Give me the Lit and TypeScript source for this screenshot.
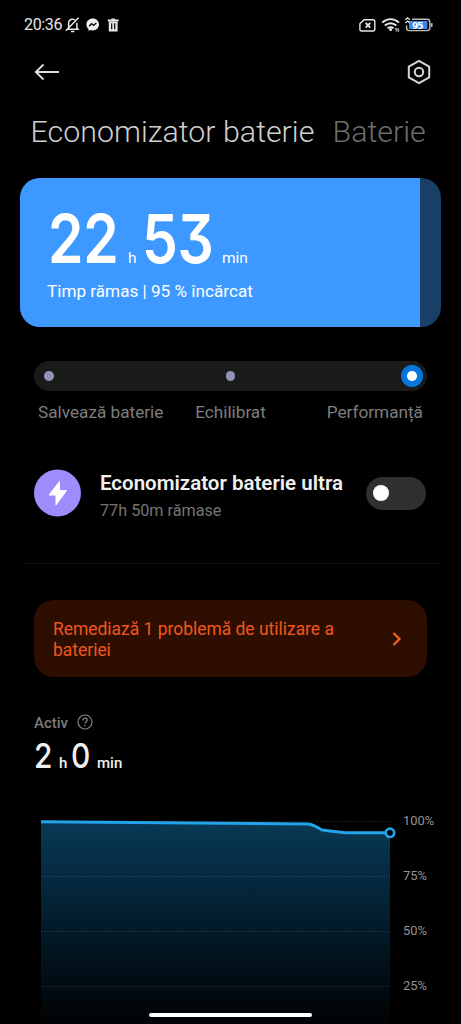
import { LitElement, html, css, svg } from "lit";
import { customElement, state } from "lit/decorators.js";

@customElement("status-bar")
class StatusBar extends LitElement {
  static styles = css`
    :host { display: flex; align-items: center; height: 50px; padding: 0 27px 0 24px; box-sizing: border-box; color: #e8e8e8; }
    .time { font-size: 16px; line-height: 20px; width: 41px; padding-top: 1px; letter-spacing: -0.35px; white-space: nowrap; }
    .spacer { flex: 1; }
    svg { display: block; flex: none; }
    .level { font: 700 9px "DejaVu Sans", sans-serif; }
  `;
  render() {
    return html`
      <span class="time">20:36</span>
      <svg width="15" height="16" viewBox="0 0 15 16" fill="none" stroke="#e8e8e8" stroke-width="1.5">
        <path d="M2.400 12.300h11.600M3.600 11V6.800C3.600 3.800 5 2.300 7.600 2.300c1 0 1.700.2 2.400.7M11.900 5.800V12M.8 13.800 13.600.8M6 14.500h3.400" />
      </svg>
      <svg width="42" height="16" viewBox="0 0 42 16">
        <path fill="#f0f0f0" d="M12.700 1.600C9.100 1.600 6.400 4.200 6.400 7.600c0 1.900.8 3.400 2.100 4.500v2l1.900-1c.8.3 1.500.4 2.300.4 3.600 0 6.300-2.600 6.300-5.900s-2.700-6-6.300-6z" />
        <path fill="none" stroke="#111" stroke-width="1.500" d="m9.100 9.200 2.400-2.500 2.200 1.600 2.600-2.300" />
        <path fill="#e8e8e8" d="M27.800 2.500h3.200l.8-1h2.800l.8 1h3.200v1.900H27.800zM28.800 4.800h8.800v9.700h-8.800z" />
        <path stroke="#000" stroke-width="1.200" d="M31.700 6.300v6M34.700 6.300v6" />
      </svg>
      <span class="spacer"></span>
      <svg width="75" height="20" viewBox="0 0 75 20" fill="none" stroke="#e8e8e8">
        <path stroke-width="1.400" d="M5 4.700h9.300a1.500 1.500 0 0 1 1.500 1.500v8.300a1.500 1.500 0 0 1-1.500 1.500H2.400A1.500 1.500 0 0 1 .9 14.500V8.800z" />
        <path stroke-width="1.800" d="m6.700 7.800 4.600 4.800M11.300 7.800l-4.600 4.800" />
        <path stroke-width="1.900" d="M23.200 7.600c5.200-4.500 11.600-4.500 16.800 0M25.800 10.600c3.600-3 8-3 11.600 0M28.600 13.300c1.900-1.500 4.100-1.500 6 0" />
        <circle cx="31.600" cy="14.600" r="1.500" fill="#e8e8e8" stroke="none" />
        <path stroke-width="1" d="M37.200 13v3.500M36.200 14.200l1-1M39.100 13v3.500M39.100 16.500l1-1" />
        <rect x="50" y="6" width="18.500" height="8" fill="#3488ec" stroke="none" />
        <path stroke="#bdbdbd" stroke-width="1.400" d="M53 4.300h15.200a2.600 2.600 0 0 1 2.600 2.600v6.100a2.600 2.600 0 0 1-2.600 2.600H50.200A2.600 2.600 0 0 1 47.600 13v-2.400" />
        <path stroke="#bdbdbd" stroke-width="2" d="M72.600 8.200v3.600" />
        <path stroke="#e8e8e8" stroke-width="1.200" d="m46.400 4.800 2.200-2 2.200 2M46.400 8l2.200-2 2.200 2" />
        <text class="level" x="53" y="13.500" fill="#fff" stroke="none" textLength="11.500">95</text>
      </svg>
    `;
  }
}

@customElement("battery-card")
class BatteryCard extends LitElement {
  static styles = css`
    :host { display: flex; flex: none; height: 149px; margin: 0 20px; border-radius: 20px; overflow: hidden; background: #193f66; color: #fff; }
    .fill { width: 95.0%; box-sizing: border-box; background: #3d99ff; padding: 25px 0 0 27px; }
    .time { display: flex; align-items: baseline; height: 72px; line-height: 72px; padding-left: 1px; }
    .digits { font-family: Inter, sans-serif; font-weight: 600; font-size: 67px; font-feature-settings: "cv09" 1; width: 71px; transform: scaleX(0.85); transform-origin: 0 0; white-space: nowrap; letter-spacing: -0.3px; }
    .unit { font-size: 15.500px; }
    .h { width: 14px; padding-left: 9px; }
    .min { padding-left: 9px; }
    .caption { font-size: 17.150px; line-height: 20px; margin-top: 6px; white-space: nowrap; }
  `;
  render() {
    return html`<div class="fill">
      <div class="time">
        <span class="digits">22</span><span class="unit h">h</span><span class="digits">53</span><span class="unit min">min</span>
      </div>
      <div class="caption">Timp rămas | 95 % încărcat</div>
    </div>`;
  }
}

@customElement("mode-slider")
class ModeSlider extends LitElement {
  static styles = css`
    :host { display: block; margin: 34px 34px 0; }
    .track { height: 30px; box-sizing: border-box; border-radius: 15px; background: #191b1a; display: flex; align-items: center; justify-content: space-between; padding: 0 4px; }
    .stop { width: 22px; height: 22px; border-radius: 50%; display: grid; place-items: center; }
    .stop::after { content: ""; width: 9.500px; height: 9.500px; border-radius: 50%; background: #9093b5; }
    .on { background: #0877dd; }
    .on::after { background: #fff; }
    .labels { display: grid; grid-template-columns: 1fr 1fr 1fr; padding: 0 4px; margin-top: 11px; font-size: 17.200px; line-height: 20px; color: #7d7d7d; white-space: nowrap; }
    .c { text-align: center; }
    .r { text-align: right; }
  `;
  render() {
    return html`
      <div class="track"><i class="stop"></i><i class="stop"></i><i class="stop on"></i></div>
      <div class="labels"><span>Salvează baterie</span><span class="c">Echilibrat</span><span class="r">Performanță</span></div>
    `;
  }
}

@customElement("battery-chart")
class BatteryChart extends LitElement {
  static styles = css`
    :host { display: block; height: 214px; overflow: hidden; }
    svg { display: block; }
    text { font-family: Roboto, sans-serif; font-size: 12.900px; fill: #929292; }
  `;
  render() {
    const labels = ["100%", "75%", "50%", "25%"];
    return html`<svg width="461" height="214" viewBox="0 810 461 214">
      <defs>
        <linearGradient id="area" gradientUnits="userSpaceOnUse" x1="0" y1="822" x2="0" y2="1024">
          <stop offset="0" stop-color="#083954" />
          <stop offset="0.250" stop-color="#052b42" />
          <stop offset="0.600" stop-color="#021723" />
          <stop offset="0.900" stop-color="#01070b" />
          <stop offset="1" stop-color="#000305" />
        </linearGradient>
      </defs>
      <path fill="url(#area)" d="M41 822 308 824c6 0 10 5 15 6.500 6 1.500 12 2.500 22 2.500h45v191H41z" />
      ${labels.map((t, i) => svg`
        <path d="M41 ${821.500 + i * 55}H390" stroke="#57809a" stroke-opacity="0.220" stroke-dasharray="2 1" />
        <text x="403" y="${825.200 + i * 55}">${t}</text>`)}
      <path fill="none" stroke="#22a3ea" stroke-width="3" d="M41 821.800 308 824c5 0 9 3.500 14 6l23 2.800h41" />
      <circle cx="390" cy="832.800" r="4.200" fill="#000" stroke="#22a3ea" stroke-width="2.700" />
    </svg>`;
  }
}

@customElement("app-root")
class AppRoot extends LitElement {
  @state() private ultra = false;

  static styles = css`
    :host { display: flex; flex-direction: column; position: relative; width: 461px; height: 1024px; overflow: hidden; background: #000; color: #efefef; font-family: Roboto, sans-serif; }
    svg { display: block; flex: none; }
    .nav { display: flex; justify-content: space-between; align-items: center; height: 44px; padding: 0 29px 0 34px; }
    .tabs { display: flex; align-items: center; height: 84.500px; padding: 0 0 9px 30.500px; box-sizing: border-box; font-size: 30.400px; font-weight: 300; white-space: nowrap; }
    .tab { width: 302px; color: #cfcfcf; }
    .dim { color: #6c6c6c; }
    .ultra { display: flex; align-items: center; height: 48px; padding: 0 35px 0 34px; margin-top: 47px; }
    .copy { margin-left: 19px; padding-top: 5px; flex: 1; white-space: nowrap; }
    .name { font-size: 20.500px; line-height: 26px; font-weight: 600; color: #f0f0f0; }
    .left { font-size: 16.200px; line-height: 20px; margin-top: 5px; color: #747474; }
    .switch { width: 60px; height: 33px; border: 0; padding: 0 8px 0 7px; border-radius: 17px; background: #303030; display: flex; align-items: center; }
    .knob { width: 16px; height: 16px; border-radius: 50%; background: #fff; }
    .rule { height: 1px; margin: 46px 23px 0; background: #111; }
    .warn { display: flex; align-items: center; justify-content: space-between; margin: 36px 34px 0; height: 77px; box-sizing: border-box; padding: 0 23px 0 19px; border-radius: 20px; background: #2d0e01; color: #f2561d; font-size: 17.450px; line-height: 20.500px; }
    .msg { width: 300px; padding-top: 2px; }
    .active { display: flex; align-items: center; gap: 9px; height: 20px; margin: 35.500px 0 0 34px; font-size: 15px; font-weight: 500; color: #7b7b7b; }
    .active span { padding-top: 1px; }
    .dur { display: flex; align-items: baseline; height: 40px; line-height: 40px; margin: 4px 0 34px 34px; font-size: 15px; font-weight: 500; }
    .num { font-family: Inter, sans-serif; font-size: 34px; width: 18px; transform: scaleX(0.880); transform-origin: 0 0; }
    .h { width: 12px; padding-left: 7px; }
    .m { padding-left: 8px; }
    .home { position: absolute; left: 149px; bottom: 7px; width: 163px; height: 4px; border-radius: 2px; background: #fff; }
  `;

  render() {
    return html`
      <status-bar></status-bar>
      <div class="nav">
        <svg width="26" height="18" viewBox="0 0 26 18" fill="none" stroke="#e0dedf" stroke-width="1.800"><path d="M25 9H2M9.500 1.500 1.800 9l7.700 7.500" /></svg>
        <svg width="26" height="26" viewBox="0 0 26 26" fill="none" stroke="#d6d6d6" stroke-width="2"><path stroke-linejoin="round" d="M13 1.800 23.200 7.600v10.800L13 24.200 2.800 18.400V7.600z" /><circle cx="13" cy="13" r="4.200" /></svg>
      </div>
      <div class="tabs"><span class="tab">Economizator baterie</span><span class="dim">Baterie</span></div>
      <battery-card></battery-card>
      <mode-slider></mode-slider>
      <div class="ultra">
        <svg width="47" height="48" viewBox="0 0 47 48"><circle cx="23.500" cy="24" r="23.500" fill="#9d8cfb" /><path fill="#fff" stroke="#fff" stroke-linejoin="round" d="M25.500 12.500 15 26h7v10l10.500-14.500h-7z" /></svg>
        <div class="copy"><div class="name">Economizator baterie ultra</div><div class="left">77h 50m rămase</div></div>
        <button class="switch" aria-pressed=${this.ultra} @click=${() => (this.ultra = !this.ultra)}><span class="knob"></span></button>
      </div>
      <div class="rule"></div>
      <div class="warn">
        <span class="msg">Remediază 1 problemă de utilizare a bateriei</span>
        <svg width="14" height="16" viewBox="0 0 14 16" fill="none" stroke="#f2641f" stroke-width="2.200"><path d="m3.500 2 6 6-6 6" /></svg>
      </div>
      <div class="active"><span>Activ</span>
        <svg width="16" height="16" viewBox="0 0 16 16" fill="none" stroke="#858585" stroke-width="1.200"><circle cx="8" cy="8" r="7" /><path d="M5.800 6.400c0-3 4.500-2.800 4.500-.2C10.300 7.700 8 8 8 9.600M8 10.800v1.400" /></svg>
      </div>
      <div class="dur"><span class="num">2</span><span class="h">h</span><span class="num">0</span><span class="m">min</span></div>
      <battery-chart></battery-chart>
      <div class="home"></div>
    `;
  }
}
